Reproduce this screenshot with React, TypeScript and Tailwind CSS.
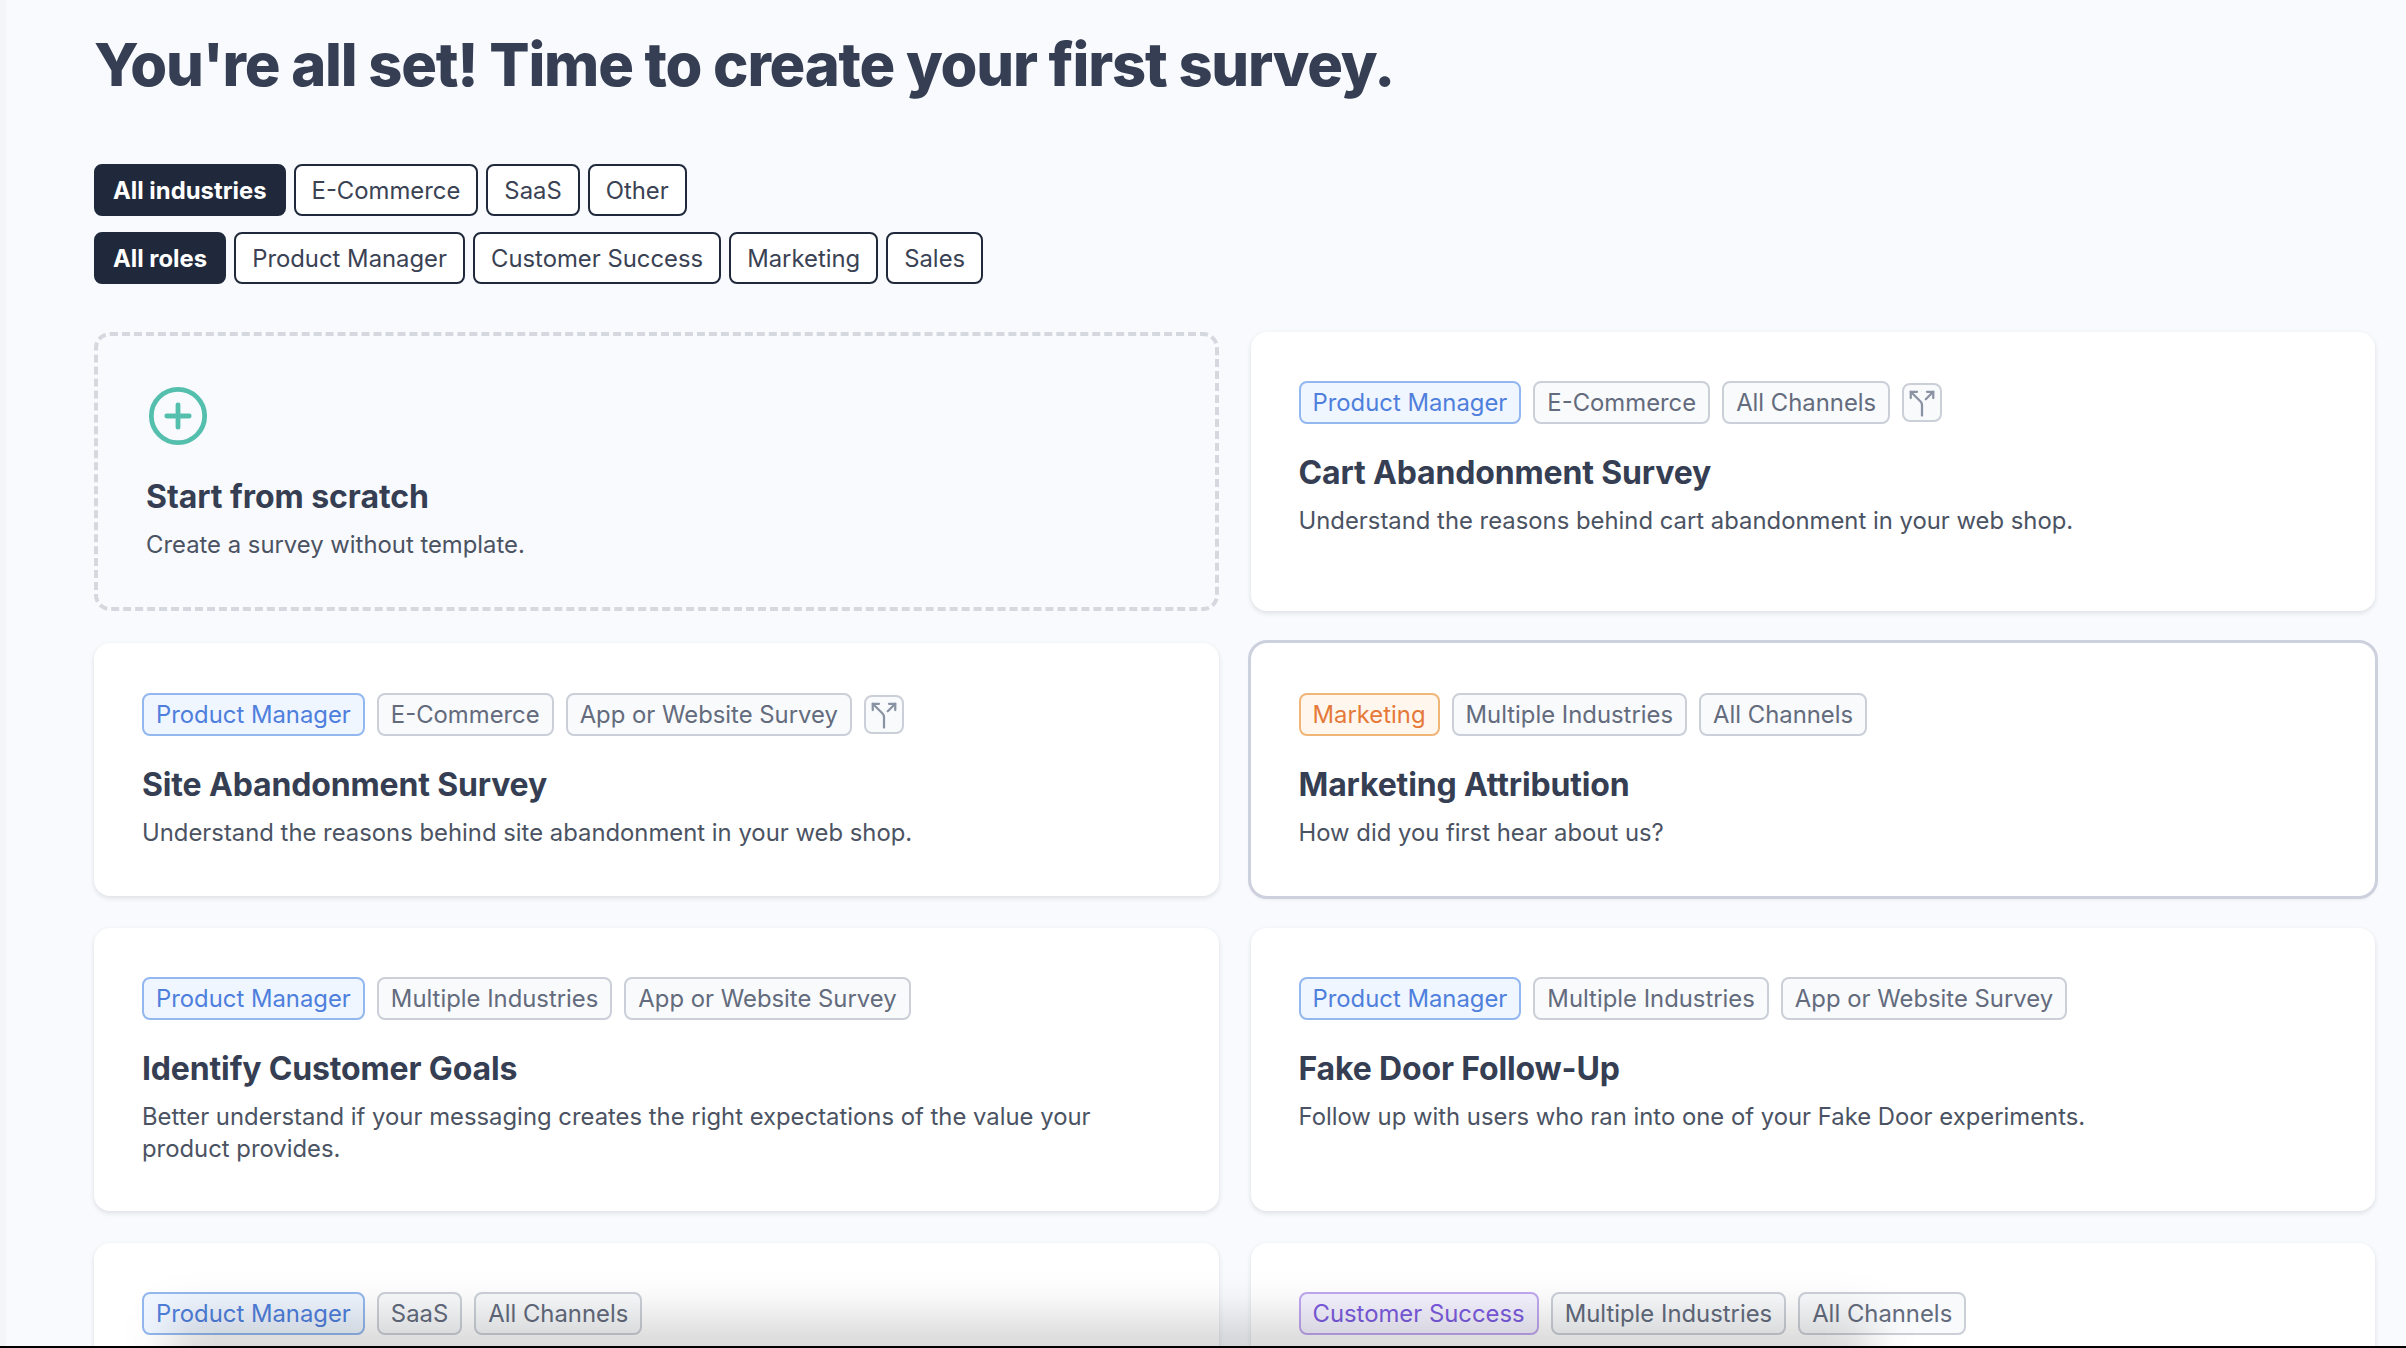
import React from "react";

type Tone = "blue" | "orange" | "purple" | "gray";
const tones: Record<Tone, string> = {
  blue: "border-[#93b8ef] bg-[#eff6ff] text-[#4f7fdc]",
  orange: "border-[#f0b678] bg-[#fff7ed] text-[#e5793a]",
  purple: "border-[#c0a8f0] bg-[#f5f3ff] text-[#7c5ce0]",
  gray: "border-[#cbd0d8] bg-[#f8fafc] text-[#636b7d]",
};

function Tag({ tone = "gray", children }: { tone?: Tone; children: React.ReactNode }) {
  return (
    <span className={`inline-flex h-[43px] items-center rounded-[8px] border-2 px-[12px] text-[23.85px] leading-none whitespace-nowrap ${tones[tone]}`}>
      {children}
    </span>
  );
}

function Split() {
  return (
    <span className="inline-flex h-[39px] w-[40px] items-center justify-center rounded-[8px] border-2 border-[#cbd0d8] bg-[#f8fafc] text-[#8a93a3]">
      <svg width="30" height="30" viewBox="0 0 24 24" fill="none" stroke="currentColor" strokeWidth="1.8" strokeLinecap="round" strokeLinejoin="round">
        <path d="M16 3h5v5" />
        <path d="M8 3H3v5" />
        <path d="M12 22v-8.3a4 4 0 0 0-1.172-2.872L3 3" />
        <path d="m15 9 6-6" />
      </svg>
    </span>
  );
}

function Card({
  tags,
  split,
  title,
  desc,
  selected,
  h,
}: {
  tags: [string, Tone][];
  split?: boolean;
  title: string;
  desc?: string;
  selected?: boolean;
  h: string;
}) {
  return (
    <div className={`${h} rounded-[16px] bg-white px-[48px] shadow-[0_2px_5px_rgba(15,23,42,0.12)] ${selected ? "outline-[3px] outline-[#cdd1de]" : ""}`}>
      <div className="flex items-center gap-[12px]">
        {tags.map(([t, tone]) => (
          <Tag key={t} tone={tone}>{t}</Tag>
        ))}
        {split && <Split />}
      </div>
      <h3 className="mt-[27px] text-[32px] leading-[44px] font-bold tracking-[-0.15px] text-[#353e52]">{title}</h3>
      {desc && <p className="mt-[10px] text-[23.85px] leading-[32px] text-[#4b5363]">{desc}</p>}
    </div>
  );
}

function Pill({ active, children }: { active?: boolean; children: React.ReactNode }) {
  return (
    <span className={`inline-flex h-[52px] items-center rounded-[8px] border-2 border-[#1f293b] pt-[2px] text-[23.85px] leading-none whitespace-nowrap ${active ? "bg-[#1f293b] px-[17px] font-bold text-white" : "bg-white px-[16px] text-[#3a4254]"}`}>
      {children}
    </span>
  );
}

export default function App() {
  return (
    <div className="flex h-[1348px] w-[2406px] flex-col overflow-hidden bg-black font-['Inter',sans-serif]">
      <div className="relative flex h-[1346px] overflow-hidden bg-[#f8fafd]">
        <div className="w-[6px] shrink-0 bg-[#f3f5f8]" />
        <main className="flex-1 pr-[31px] pl-[88px]">
          <h1 className="pt-[28px] text-[59.6px] leading-[72px] font-extrabold tracking-[-1.2px] text-[#353e52]">You're all set! Time to create your first survey.</h1>
          <div className="mt-[64px] flex gap-[8px]">
            <Pill active>All industries</Pill>
            <Pill>E-Commerce</Pill>
            <Pill>SaaS</Pill>
            <Pill>Other</Pill>
          </div>
          <div className="mt-[16px] flex gap-[8px]">
            <Pill active>All roles</Pill>
            <Pill>Product Manager</Pill>
            <Pill>Customer Success</Pill>
            <Pill>Marketing</Pill>
            <Pill>Sales</Pill>
          </div>
          <div className="mt-[48px] grid grid-cols-2 gap-x-[32px] gap-y-[32px]">
            <div className="h-[279px] rounded-[16px] border-[4px] border-dashed border-[#d5d8de] pt-[48px] pl-[48px]">
              <svg width="64" height="64" viewBox="0 0 24 24" fill="none" stroke="#55bfae" strokeWidth="1.8" strokeLinecap="round" strokeLinejoin="round" className="block">
                <circle cx="12" cy="12" r="10" />
                <path d="M12 7.8v8.4M7.8 12h8.4" />
              </svg>
              <h3 className="mt-[27px] text-[32px] leading-[44px] font-bold tracking-[-0.05px] text-[#353e52]">Start from scratch</h3>
              <p className="mt-[10px] text-[23.85px] leading-[32px] text-[#4b5363]">Create a survey without template.</p>
            </div>
            <Card h="h-[279px] pt-[49px]" split tags={[["Product Manager", "blue"], ["E-Commerce", "gray"], ["All Channels", "gray"]]} title="Cart Abandonment Survey" desc="Understand the reasons behind cart abandonment in your web shop." />
            <Card h="h-[253px] pt-[50px]" split tags={[["Product Manager", "blue"], ["E-Commerce", "gray"], ["App or Website Survey", "gray"]]} title="Site Abandonment Survey" desc="Understand the reasons behind site abandonment in your web shop." />
            <Card h="h-[253px] pt-[50px]" selected tags={[["Marketing", "orange"], ["Multiple Industries", "gray"], ["All Channels", "gray"]]} title="Marketing Attribution" desc="How did you first hear about us?" />
            <Card h="h-[283px] pt-[49px]" tags={[["Product Manager", "blue"], ["Multiple Industries", "gray"], ["App or Website Survey", "gray"]]} title="Identify Customer Goals" desc="Better understand if your messaging creates the right expectations of the value your product provides." />
            <Card h="h-[283px] pt-[49px]" tags={[["Product Manager", "blue"], ["Multiple Industries", "gray"], ["App or Website Survey", "gray"]]} title="Fake Door Follow-Up" desc="Follow up with users who ran into one of your Fake Door experiments." />
            <Card h="h-[284px] pt-[49px]" tags={[["Product Manager", "blue"], ["SaaS", "gray"], ["All Channels", "gray"]]} title="" />
            <Card h="h-[284px] pt-[49px]" tags={[["Customer Success", "purple"], ["Multiple Industries", "gray"], ["All Channels", "gray"]]} title="" />
          </div>
        </main>
        <div className="pointer-events-none absolute bottom-[-70px] left-[170px] h-[100px] w-[1700px] bg-black/15 blur-[22px]" />
      </div>
    </div>
  );
}
